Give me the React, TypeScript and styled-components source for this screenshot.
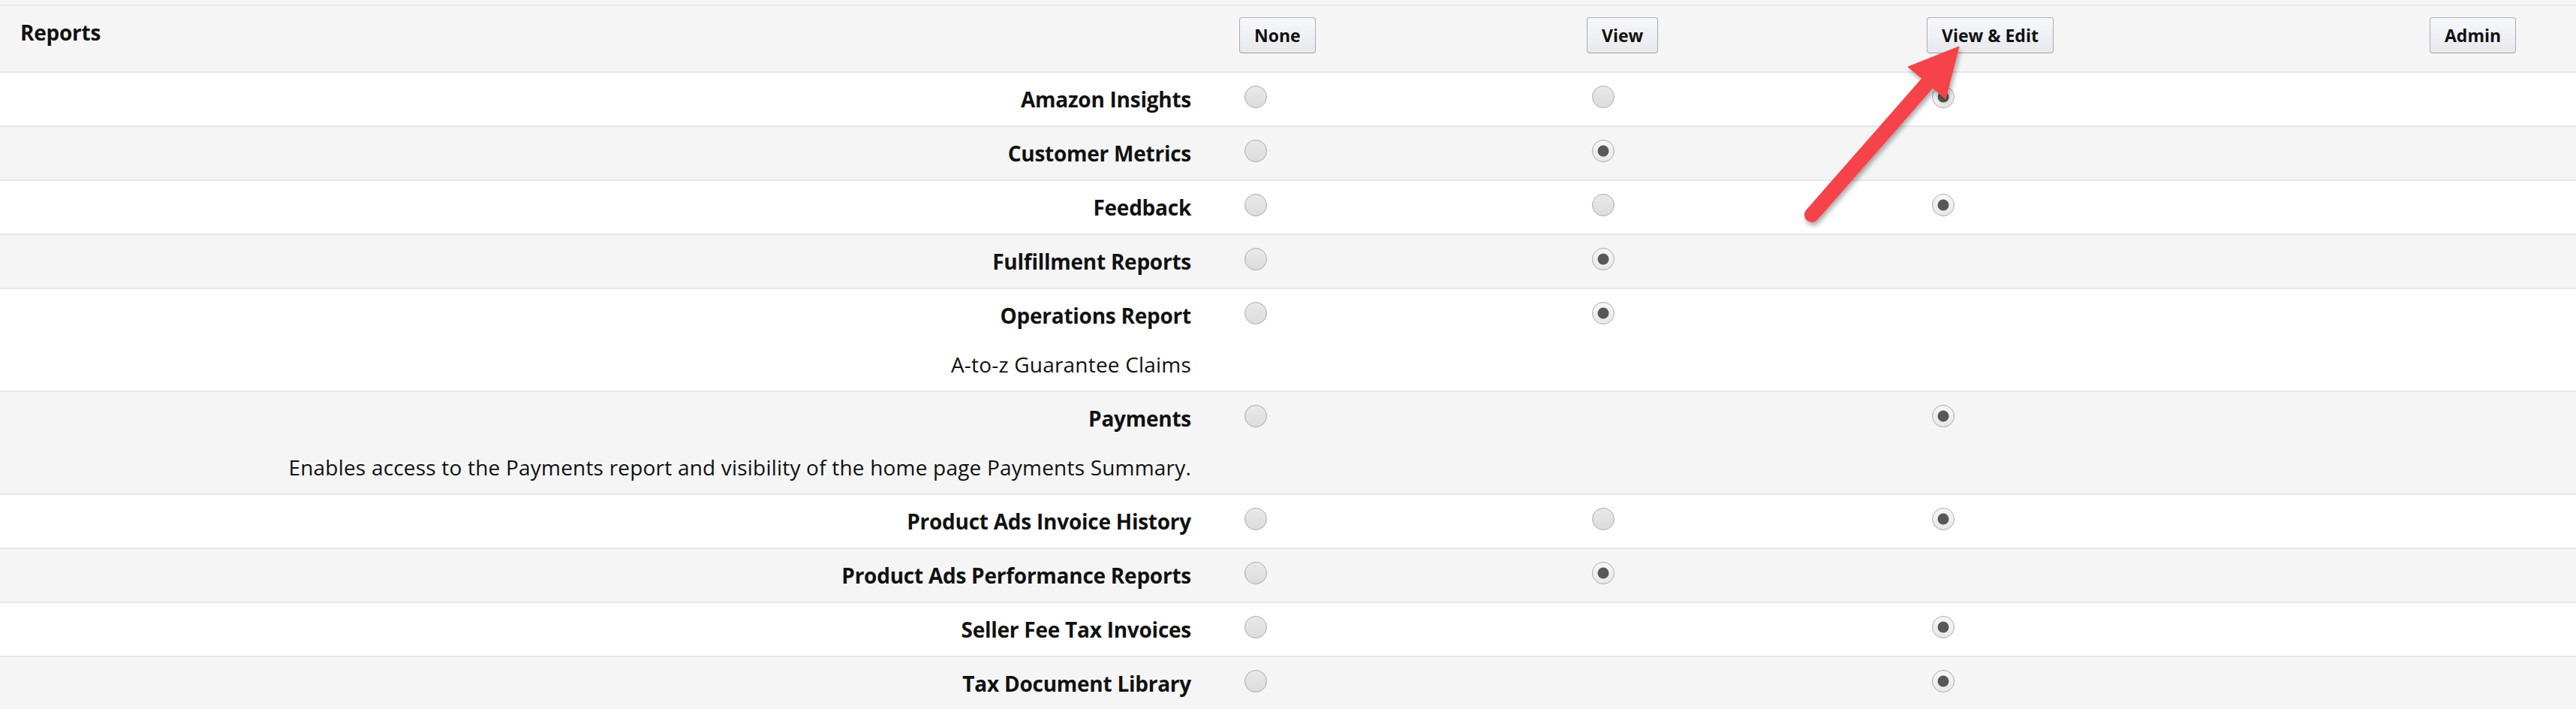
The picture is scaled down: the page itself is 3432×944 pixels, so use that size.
import styled, { createGlobalStyle } from "styled-components";

type Level = "none" | "view" | "edit" | "admin";

interface ReportRow {
  label: string;
  description?: string;
  options: Level[];
  selected: Level;
}

const columns: { key: Level; title: string }[] = [
  { key: "none", title: "None" },
  { key: "view", title: "View" },
  { key: "edit", title: "View & Edit" },
  { key: "admin", title: "Admin" },
];

const rows: ReportRow[] = [
  { label: "Amazon Insights", options: ["none", "view", "edit"], selected: "edit" },
  { label: "Customer Metrics", options: ["none", "view"], selected: "view" },
  { label: "Feedback", options: ["none", "view", "edit"], selected: "edit" },
  { label: "Fulfillment Reports", options: ["none", "view"], selected: "view" },
  {
    label: "Operations Report",
    description: "A-to-z Guarantee Claims",
    options: ["none", "view"],
    selected: "view",
  },
  {
    label: "Payments",
    description: "Enables access to the Payments report and visibility of the home page Payments Summary.",
    options: ["none", "edit"],
    selected: "edit",
  },
  { label: "Product Ads Invoice History", options: ["none", "view", "edit"], selected: "edit" },
  { label: "Product Ads Performance Reports", options: ["none", "view"], selected: "view" },
  { label: "Seller Fee Tax Invoices", options: ["none", "edit"], selected: "edit" },
  { label: "Tax Document Library", options: ["none", "edit"], selected: "edit" },
];

const GlobalStyle = createGlobalStyle`
  html, body {
    margin: 0;
    padding: 0;
    background: #ffffff;
  }
  body {
    font-family: "Open Sans", "Liberation Sans", Arial, sans-serif;
    color: #111111;
    -webkit-font-smoothing: antialiased;
  }
`;

const Page = styled.div`
  position: relative;
  width: 3432px;
  height: 944px;
  overflow: hidden;
  background: #ffffff;
`;

const TopBand = styled.div`
  height: 6px;
  background: #f5f5f5;
`;

const Row = styled.div<{ $shaded: boolean; $header?: boolean }>`
  display: grid;
  grid-template-columns: 1651px 463px 453px 670px 1fr;
  align-items: start;
  border-top: 2px solid #e7e7e7;
  background: ${(p) => (p.$shaded ? "#f5f5f5" : "#ffffff")};
  padding: ${(p) => (p.$header ? "15px 0 24px" : "15px 0")};
`;

const LabelCell = styled.div<{ $left?: boolean }>`
  display: flex;
  flex-direction: column;
  align-items: ${(p) => (p.$left ? "flex-start" : "flex-end")};
  padding: ${(p) => (p.$left ? "0 0 0 27px" : "0 64px 0 0")};
  text-align: ${(p) => (p.$left ? "left" : "right")};
`;

const Label = styled.span`
  font-size: 28px;
  font-weight: 700;
  line-height: 40px;
  letter-spacing: -0.25px;
  white-space: nowrap;
`;

const Description = styled.span`
  margin-top: 25px;
  font-size: 28px;
  font-weight: 400;
  line-height: 40px;
  letter-spacing: 0.2px;
  white-space: nowrap;
`;

const Cell = styled.div`
  display: flex;
  align-items: flex-start;
`;

const ColumnButton = styled.button`
  height: 48px;
  padding: 0 19px;
  border: 1px solid #a9adb4;
  border-bottom-color: #9a9ea5;
  border-radius: 4px;
  background: linear-gradient(#f7f8fa, #e7e9ec);
  box-shadow: inset 0 1px 0 rgba(255, 255, 255, 0.6);
  font-family: "Open Sans", "Liberation Sans", Arial, sans-serif;
  font-size: 23px;
  font-weight: 700;
  color: #111111;
  cursor: pointer;
`;

const Radio = styled.span<{ $checked: boolean }>`
  position: relative;
  display: block;
  box-sizing: border-box;
  width: 30px;
  height: 30px;
  margin: 2px 0 0 7px;
  border-radius: 50%;
  border: 1.5px solid #ababab;
  background: ${(p) =>
    p.$checked
      ? "linear-gradient(#f6f6f6, #e8e8e8)"
      : "linear-gradient(#e9e9e9, #dcdcdc)"};

  &::after {
    content: "";
    display: ${(p) => (p.$checked ? "block" : "none")};
    position: absolute;
    left: 50%;
    top: 50%;
    width: 15px;
    height: 15px;
    border-radius: 50%;
    background: #585858;
    transform: translate(-50%, -50%);
  }
`;

const ArrowLayer = styled.svg`
  position: absolute;
  left: 0;
  top: 0;
  pointer-events: none;
  overflow: visible;
`;

function Arrow() {
  return (
    <ArrowLayer width={3432} height={944} viewBox="0 0 3432 944">
      <defs>
        <filter id="arrowShadow" x="-20%" y="-20%" width="140%" height="140%">
          <feDropShadow dx="2" dy="4" stdDeviation="3" floodColor="#000" floodOpacity="0.35" />
        </filter>
      </defs>
      <g filter="url(#arrowShadow)" fill="#f6434a" stroke="#f6434a">
        <line x1={2414} y1={286} x2={2572} y2={106} strokeWidth={20} strokeLinecap="round" />
        <polygon points="2610,62 2542,89 2560,104 2582,123 2592,132" strokeWidth={1} strokeLinejoin="round" />
      </g>
    </ArrowLayer>
  );
}

export default function App() {
  return (
    <>
      <GlobalStyle />
      <Page>
        <TopBand />
        <Row $shaded $header>
          <LabelCell $left>
            <Label>Reports</Label>
          </LabelCell>
          {columns.map((c) => (
            <Cell key={c.key}>
              <ColumnButton type="button">{c.title}</ColumnButton>
            </Cell>
          ))}
        </Row>
        {rows.map((row, i) => (
          <Row key={row.label} $shaded={i % 2 === 1}>
            <LabelCell>
              <Label>{row.label}</Label>
              {row.description && <Description>{row.description}</Description>}
            </LabelCell>
            {columns.map((c) => (
              <Cell key={c.key}>
                {row.options.includes(c.key) && <Radio $checked={row.selected === c.key} />}
              </Cell>
            ))}
          </Row>
        ))}
        <Arrow />
      </Page>
    </>
  );
}
